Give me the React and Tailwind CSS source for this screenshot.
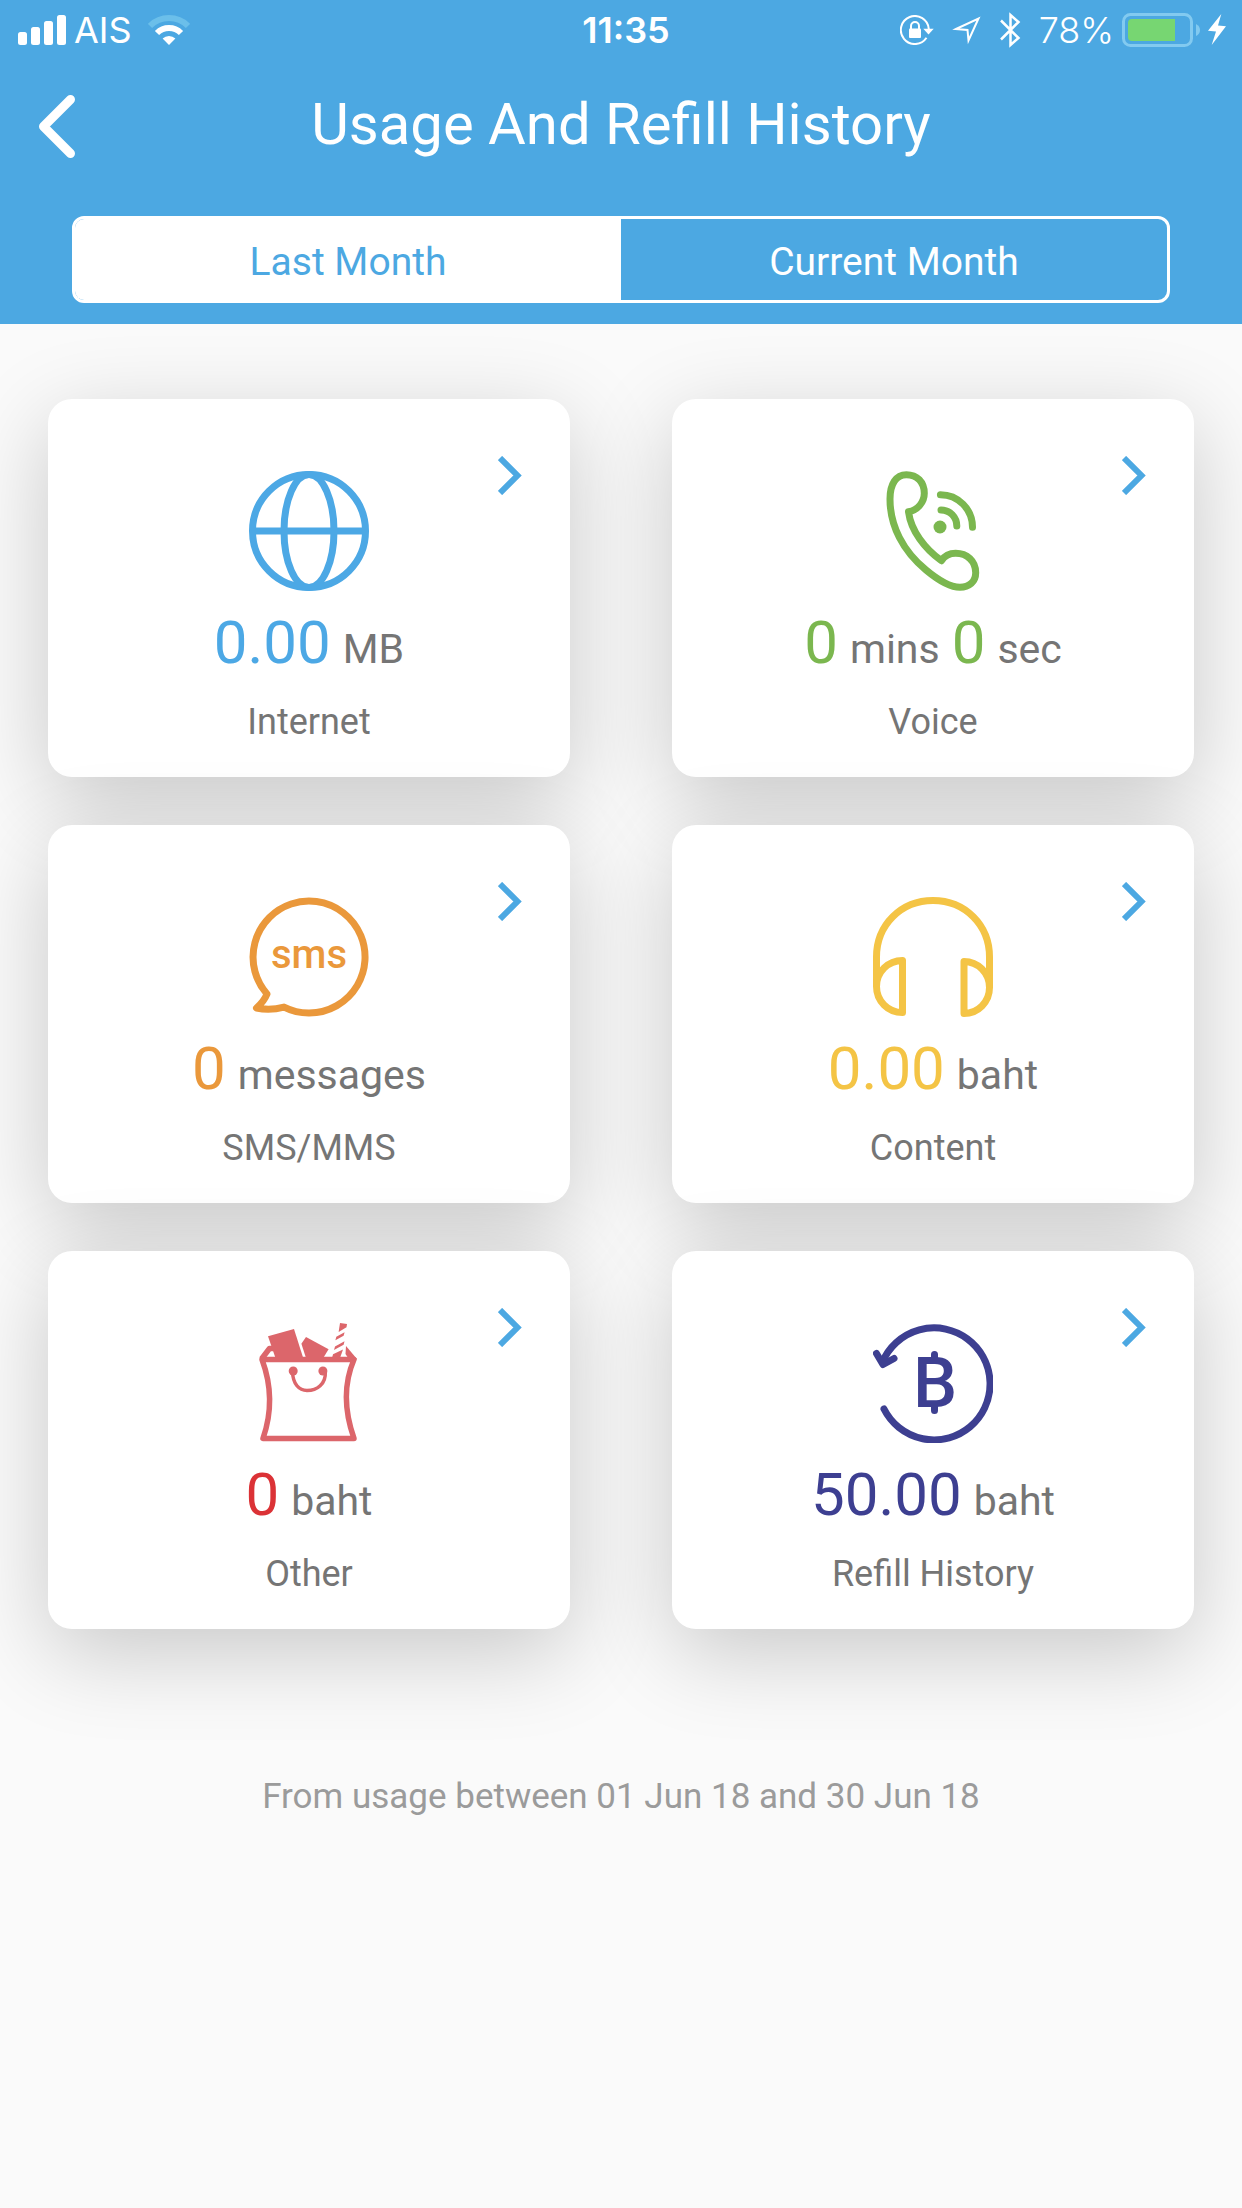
import React, { useState } from 'react';

const GlobeIcon = () => (
    <svg className="size-[120px] mt-[15px]" viewBox="0 0 120 120" fill="none" stroke="#4ca8e5" strokeWidth="7">
        <circle cx="60" cy="60" r="56.5" />
        <ellipse cx="60" cy="60" rx="25" ry="56.5" />
        <path d="M3.5 60H116.5" />
    </svg>
);

const VoiceIcon = () => (
    <svg className="size-[120px] mt-[15px]" viewBox="0 0 120 120" fill="none" stroke="#7bb74f" strokeWidth="7" strokeLinecap="round" strokeLinejoin="round">
        <path d="M35.5 40.7C45 39 51.3 31 51.3 22.3C51.3 11 44 3.7 33.4 3.7C23 3.7 17 13 17 28C17 55 30 80 53 99C65 109 78 116.3 87 116.3C96 116.3 102.7 111 102.7 101.7C102.7 90 94 82.3 82.7 82.3C76 82.3 71.5 85 68.4 89.7C52 78 38 60 35.5 40.7Z" />
        <path d="M67.4 23.7C85 23.7 99.5 38 99.5 56.3" />
        <path d="M68 39C77 39 83.8 46 83.8 55" />
        <circle cx="67" cy="56" r="6.5" fill="#7bb74f" stroke="none" />
    </svg>
);

const SmsIcon = () => (
    <svg className="size-[120px] mt-[15px]" viewBox="0 0 120 120" fill="none" stroke="#ea983b" strokeWidth="7" strokeLinejoin="round">
        <path d="M35 110.1A56 56 0 1 0 18 97C16 102 12 107 7.5 111C17 113 26 112.5 35 110.1Z" />
        <text x="60" y="71" textAnchor="middle" fill="#ea983b" stroke="none" className="text-[40px] font-medium">sms</text>
    </svg>
);

const HeadphonesIcon = () => (
    <svg className="size-[120px] mt-[15px]" viewBox="0 0 120 120" fill="none" stroke="#f4c445" strokeWidth="7" strokeLinejoin="round">
        <path d="M3.5 90V60C3.5 28 28 3.5 60 3.5S116.5 28 116.5 60V90" />
        <path d="M29.5 63.5V115.5C15 115.5 3.5 104 3.5 89.5S15 63.5 29.5 63.5Z" />
        <path d="M91 64.5V116.5C105 116.5 116.5 105 116.5 90.5S105 64.5 91 64.5Z" />
    </svg>
);

const BagIcon = () => (
    <svg className="size-[120px] mt-[15px]" viewBox="0 0 120 120" fill="none" stroke="#dc666b" strokeWidth="5.5" strokeLinejoin="round">
        <path d="M13 36.5Q27.7 76 14 115.5H105Q89.7 72 105 36.5Z" />
        <path d="M12.5 36L20.5 25.5H27" />
        <path d="M43.5 49C44 61 50 67.5 58 67.5C68 67.5 77 61 76.3 49" strokeWidth="3.5" />
        <g fill="#dc666b" stroke="none">
            <path d="M97 23L108 36L101 38L96.5 31Z" />
            <path d="M19 13.3L45 6L54.2 35H26.5Z" />
            <path d="M57 14L79.6 26.3L74.2 35H57L52.4 20.7Z" />
            <path d="M91 0L98 1L97.5 4.3L89.6 9Z" />
            <path d="M87.3 13.7L95.6 9.3L94.6 12.7L86.4 17.3Z" />
            <path d="M86 23.5L95.5 18.3L94.6 21.7L85 27Z" />
            <path d="M84 31.3L94 26.5L91 35H83Z" />
            <circle cx="44.2" cy="48" r="4.5" />
            <circle cx="73.9" cy="48" r="4.5" />
        </g>
    </svg>
);

const RefillIcon = () => (
    <svg className="size-[120px] mt-[15px]" viewBox="0 0 120 120" fill="none" stroke="#3d3f91" strokeWidth="7" strokeLinecap="round" strokeLinejoin="round">
        <path d="M9.5 39A56 56 0 1 1 11 86" />
        <path d="M3.5 30.5L10 41.5L21 35.5" />
        <path d="M61.5 31.5V36M61.5 83V87.5" />
        <text x="62" y="84" textAnchor="middle" fill="#3d3f91" stroke="none" className="text-[70px] font-medium">B</text>
    </svg>
);

const items = [
    { label: 'Internet', icon: GlobeIcon, color: 'text-[#4ca8e5]', values: [['0.00', 'MB']] },
    { label: 'Voice', icon: VoiceIcon, color: 'text-[#7bb74f]', values: [['0', 'mins'], ['0', 'sec']] },
    { label: 'SMS/MMS', icon: SmsIcon, color: 'text-[#ea983b]', values: [['0', 'messages']] },
    { label: 'Content', icon: HeadphonesIcon, color: 'text-[#f4c445]', values: [['0.00', 'baht']] },
    { label: 'Other', icon: BagIcon, color: 'text-[#db3236]', values: [['0', 'baht']] },
    { label: 'Refill History', icon: RefillIcon, color: 'text-[#3d3f91]', values: [['50.00', 'baht']] },
];

const StatusBar = () => (
    <div className="flex items-center h-[60px] pl-[18px] pr-2 font-['Inter',sans-serif] text-[36px] leading-[60px]">
        <div className="flex flex-1 items-center">
            <svg className="w-12 h-[30px] mr-2" viewBox="0 0 48 30" fill="#fff">
                <rect x="0" y="17" width="9" height="13" rx="2.5" />
                <rect x="13" y="12" width="9" height="18" rx="2.5" />
                <rect x="26" y="6" width="9" height="24" rx="2.5" />
                <rect x="39" y="0" width="9" height="30" rx="2.5" />
            </svg>
            <span>AIS</span>
            <svg className="w-[42px] h-[30px] ml-4" viewBox="0 0 42 30" fill="none" strokeWidth="6">
                <path d="M2 10.9A27 27 0 0 1 40 10.9" stroke="#6bbfea" />
                <path d="M9 18A17 17 0 0 1 33 18" stroke="#fff" />
                <path d="M21 30L14.6 23.6A9 9 0 0 1 27.4 23.6Z" fill="#fff" />
            </svg>
        </div>
        <span className="font-semibold">11:35</span>
        <div className="flex flex-1 items-center justify-end">
            <svg className="w-[34px] h-[30px]" viewBox="0 0 34 30" fill="none" stroke="#fff" strokeWidth="2">
                <path d="M28.8 14A14 14 0 1 0 26.5 22.8" />
                <path d="M23.3 13.7H33.7L28.5 19.5Z" fill="#fff" stroke="none" />
                <rect x="9" y="13.5" width="12" height="9.5" rx="1" fill="#fff" stroke="none" />
                <path d="M11 14V11a4 4 0 0 1 8 0V14" />
            </svg>
            <svg className="w-[30px] h-[30px] ml-[18px]" viewBox="0 0 30 30" fill="none" stroke="#fff" strokeWidth="2">
                <path d="M4 14L26.5 3.5L16.5 25.5L15.5 15Z" />
            </svg>
            <svg className="w-[21px] h-9 ml-[18px]" viewBox="0 0 21 36" fill="none" stroke="#fff" strokeWidth="2.5">
                <path d="M1 8.5L18.5 26L10.5 33V3L18.5 10L1 27.5" />
            </svg>
            <span className="font-light ml-[18px] mr-2">78%</span>
            <svg className="w-[78px] h-[34px]" viewBox="0 0 78 34">
                <rect x="1.5" y="1.5" width="68" height="31" rx="7" fill="none" stroke="#82caf0" strokeWidth="3" />
                <path d="M10 6H53V28H10a4 4 0 0 1-4-4V10a4 4 0 0 1 4-4Z" fill="#77d672" />
                <path d="M74 11Q78 13 78 17T74 23Z" fill="#82caf0" />
            </svg>
            <svg className="w-[26px] h-8 ml-2" viewBox="0 0 26 32" fill="#fff">
                <path d="M13.3 0L0 16.7L8 17.5L3.7 31L18 12.3L10 11.5Z" />
            </svg>
        </div>
    </div>
);

const UsageCard = ({ item }) => {
    const Icon = item.icon;

    return (
        <button className="block w-full bg-white rounded-[24px] px-12 pt-[57px] pb-[31px] text-center text-[#757575] shadow-[0_24px_90px_rgba(0,0,0,0.2)]">
            <span className="grid grid-cols-[1fr_auto_1fr] items-start">
                <span />
                <Icon />
                <svg className="w-6 h-[39px] justify-self-end" viewBox="0 0 24 39" fill="none" stroke="#4ca8e2" strokeWidth="6">
                    <path d="M2 2L19.5 19.5L2 37" />
                </svg>
            </span>
            <span className="flex justify-center items-baseline gap-3 h-[72px] mt-4 text-[41px] leading-[72px]">
                {item.values.map(([amount, unit]) => (
                    <React.Fragment key={unit}>
                        <span className={`text-[60px] ${item.color}`}>{amount}</span>
                        <span>{unit}</span>
                    </React.Fragment>
                ))}
            </span>
            <span className="block mt-[19px] text-[36px] leading-[48px]">{item.label}</span>
        </button>
    );
};

const App = () => {
    const [month, setMonth] = useState('Last Month');

    return (
        <div className="min-h-screen bg-[#fafafa] font-['Roboto',sans-serif]">
            <header className="bg-[#4ca8e2] text-white pb-[21px]">
                <StatusBar />
                <div className="grid grid-cols-[1fr_auto_1fr] items-center px-9 pt-7">
                    <button aria-label="Back" className="justify-self-start">
                        <svg className="w-[42px] h-[72px]" viewBox="0 0 42 72" fill="none" stroke="#fff" strokeWidth="9" strokeLinecap="round" strokeLinejoin="round">
                            <path d="M34.5 11.5L7.5 38.5L34.5 65.5" />
                        </svg>
                    </button>
                    <h1 className="text-[58px] leading-[72px]">Usage And Refill History</h1>
                </div>
                <div className="grid grid-cols-2 mx-[72px] mt-14 h-[87px] border-3 border-white rounded-[12px] overflow-hidden text-[39px]">
                    {['Last Month', 'Current Month'].map((name) => (
                        <button
                            key={name}
                            aria-pressed={month === name}
                            onClick={() => setMonth(name)}
                            className={`pt-1.5 ${month === name ? 'bg-white text-[#4ca8e2]' : 'text-white'}`}
                        >
                            {name}
                        </button>
                    ))}
                </div>
            </header>

            <main className="px-12 pt-[75px]">
                <div className="grid grid-cols-2 gap-x-[102px] gap-y-12">
                    {items.map((item) => (
                        <UsageCard key={item.label} item={item} />
                    ))}
                </div>
                <p className="mt-36 text-center text-[35px] leading-[48px] text-[#9b9b9b]">
                    From usage between 01 Jun 18 and 30 Jun 18
                </p>
            </main>
        </div>
    );
};

export default App;
